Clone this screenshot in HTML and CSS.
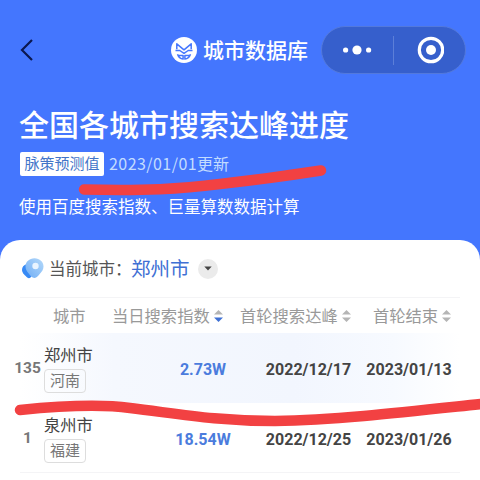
FILE: index.html
```html
<!DOCTYPE html>
<html lang="zh-CN">
<head>
<meta charset="utf-8">
<title>城市数据库</title>
<link rel="stylesheet" href="styles.css">
</head>
<body>
<header class="nav">
  <svg class="back" width="14" height="22" viewBox="0 0 14 22"><path d="M12 1 2 11l10 10"/></svg>
  <div class="brand">
    <svg width="26" height="26" viewBox="0 0 26 26">
      <circle cx="13" cy="13" r="13" fill="#fff"/>
      <g fill="none" stroke="#4476fe" stroke-width="1.5" stroke-linejoin="round">
        <path d="M5.800 12.300V6.800l7.200 6 7.200-6v5.500"/>
        <path d="M4.500 13.500h4.300l4.200 2.800 4.200-2.800h4.300"/>
        <path d="M6.500 17.200c1 2.800 3.300 4.600 5.600 4.900v-3.600H7M19.500 17.200c-1 2.800-3.300 4.600-5.600 4.900v-3.600H19"/>
      </g>
    </svg>
    <span>城市数据库</span>
  </div>
  <div class="capsule">
    <div class="half"><svg width="30" height="10" viewBox="0 0 30 10" fill="#fff"><circle cx="2.600" cy="5" r="2.600"/><circle cx="14" cy="5" r="4.600"/><circle cx="25.600" cy="5" r="2.600"/></svg></div>
    <i class="divider"></i>
    <div class="half"><svg width="28" height="28" viewBox="0 0 28 28"><circle cx="15" cy="14" r="11.700" fill="none" stroke="#fff" stroke-width="3.200"/><circle cx="15" cy="14" r="5" fill="#fff"/></svg></div>
  </div>
</header>
<section class="hero">
  <h1>全国各城市搜索达峰进度</h1>
  <div class="meta"><span class="tag">脉策预测值</span><span class="date"><span class="digits">2023/01/01</span>更新</span></div>
  <p>使用百度搜索指数、巨量算数数据计算</p>
</section>
<main class="card">
  <div class="current">
    <svg width="22" height="21" viewBox="0 0 22 21">
      <defs><linearGradient id="pin" x1="1" y1="0" x2="0" y2="1"><stop offset="0" stop-color="#b4d9fa"/><stop offset="1" stop-color="#6fadf5"/></linearGradient></defs>
      <path d="M5 6C1.500 7 0 9 0 12c.2 3.500 3.200 5.500 5.600 7.800 1 .8 2.400.4 3.400-.8l4-5Z" fill="#378af5"/>
      <path d="M12.500.3c5.200 0 9 3.600 9 8.300 0 3-1.500 5-3.600 7.200-1.600 1.800-3.100 4.100-5.400 4.100-2.600 0-4.100-2-5.600-4.100C4.800 13.500 3.500 11.500 3.500 8.600 3.500 3.900 7.300.3 12.500.3Z" fill="url(#pin)"/>
      <circle cx="13.500" cy="8" r="3.200" fill="#e9f4ff"/>
    </svg>
    <span class="label">当前城市：</span>
    <span class="city-name">郑州市</span>
    <span class="drop"><svg width="8" height="5" viewBox="0 0 8 5"><path d="M.3.4h7.400L4 4.500Z" fill="#444"/></svg></span>
  </div>
  <div class="head">
    <span class="h-city">城市</span>
    <span class="h-index">当日搜索指数<svg class="sort" width="9" height="14" viewBox="0 0 9 14"><path d="M0 5.500 4.500 1 9 5.500Z" fill="#b5b5b5"/><path d="M0 8.500h9L4.500 13Z" fill="#3f70d4"/></svg></span>
    <span class="h-peak">首轮搜索达峰<svg class="sort" width="9" height="14" viewBox="0 0 9 14" fill="#b5b5b5"><path d="M0 5.500 4.500 1 9 5.500ZM0 8.500h9L4.500 13Z"/></svg></span>
    <span class="h-end">首轮结束<svg class="sort" width="9" height="14" viewBox="0 0 9 14" fill="#b5b5b5"><path d="M0 5.500 4.500 1 9 5.500ZM0 8.500h9L4.500 13Z"/></svg></span>
  </div>
  <div class="row active">
    <span class="rank">135</span>
    <div class="city"><b>郑州市</b><span class="province">河南</span></div>
    <span class="num value">2.73W</span><span class="num">2022/12/17</span><span class="num">2023/01/13</span>
  </div>
  <div class="row">
    <span class="rank">1</span>
    <div class="city"><b>泉州市</b><span class="province">福建</span></div>
    <span class="num value">18.54W</span><span class="num">2022/12/25</span><span class="num">2023/01/26</span>
  </div>
</main>
<svg class="marks" width="480" height="480" viewBox="0 0 480 480">
  <path d="M84 189.500C145 191 180 189 220 184C265 179 292 175 321 170.500"/>
  <path d="M20 410C60 406 100 404 130 408C180 414 215 421 275 421C340 420 415 411 486 403.500"/>
</svg>
</body>
</html>
```
FILE: styles.css
```css
* { box-sizing: border-box; }
body {
  margin: 0;
  width: 480px;
  height: 480px;
  overflow: hidden;
  position: relative;
  background: #4476fe;
  font-family: "Noto Sans CJK SC", sans-serif;
  color: #444;
}
svg { display: block; flex: none; }
.nav {
  height: 100px;
  padding: 0 14px 0 20px;
  display: flex;
  align-items: center;
}
.back { fill: none; stroke: #0b1850; stroke-width: 2.2; }
.brand {
  margin-left: 137px;
  display: flex;
  align-items: center;
  gap: 6px;
  color: #fff;
  font-size: 21px;
  font-weight: 500;
  line-height: 30px;
  white-space: nowrap;
}
.brand span { padding-bottom: 2px; }
.capsule {
  margin-left: auto;
  width: 145px;
  height: 48px;
  border: 1px solid #5379dc;
  border-radius: 24px;
  background: #365fcc;
  display: flex;
  align-items: center;
}
.half { flex: 1; display: flex; justify-content: center; }
.divider { width: 1px; height: 29px; background: #5c7fd8; }
.hero { height: 140px; padding: 1px 20px 0 19px; color: #fff; }
h1 { margin: 0; font-size: 30px; line-height: 44px; font-weight: 500; }
.meta { margin-top: 7px; padding-left: 1px; display: flex; height: 24px; align-items: center; gap: 5px; }
.tag {
  width: 84px;
  height: 24px;
  border-radius: 2px;
  background: #fff;
  color: #4275c8;
  font-size: 15px;
  line-height: 22px;
  text-align: center;
}
.date { color: #c3dcff; font-size: 16px; line-height: 22px; padding-bottom: 2px; white-space: nowrap; }
.digits { letter-spacing: 0.45px; }
.hero p { margin: 18px 0 0; font-size: 16.5px; line-height: 24px; }
.card { height: 240px; background: #fff; border-radius: 20px 20px 0 0; overflow: hidden; }
.current { height: 57px; padding-left: 22px; display: flex; align-items: center; }
.label { margin-left: 5px; width: 82px; padding-bottom: 2px; font-size: 16.5px; line-height: 24px; white-space: nowrap; color: #555; }
.city-name { color: #3f70d4; font-size: 19.5px; line-height: 28px; padding-bottom: 1px; }
.drop {
  margin-left: 8px;
  width: 20px;
  height: 20px;
  border-radius: 50%;
  background: #ebebeb;
  display: flex;
  align-items: center;
  justify-content: center;
}
.head {
  height: 36px;
  margin: 0 20px;
  padding: 0 0 2px 33px;
  border-top: 1px solid #f4f4f6;
  display: flex;
  align-items: center;
  color: #999;
  font-size: 16.3px;
  white-space: nowrap;
}
.head span { display: flex; align-items: center; gap: 4px; }
.sort { margin-top: 2px; }
.h-city { width: 59px; }
.h-index { width: 128px; }
.h-peak { width: 133px; }
.row {
  height: 70px;
  margin-left: 14px;
  width: 446px;
  display: grid;
  grid-template-columns: 27px 109px 106px 105px 96px;
  align-items: center;
  background: linear-gradient(#f4f4f6, #f4f4f6) 6px 100% / 440px 1px no-repeat;
}
.row.active { background: linear-gradient(90deg, #fff 6px, #f5f8fe 100px, #f2f6fe 280px, #f7faff 380px, #fff); }
.rank, .num {
  font-family: Roboto, sans-serif;
  font-weight: 700;
  text-align: center;
  font-size: 16px;
}
.rank { font-size: 15.5px; color: #777; }
.num { padding-top: 2px; }
.value { color: #4b7cdd; }
.city { padding-left: 3px; display: flex; flex-direction: column; align-items: flex-start; }
.city b { font-size: 16.3px; font-weight: 400; line-height: 22px; margin-top: -1px; }
.province {
  margin-top: 4px;
  width: 42px;
  height: 24px;
  border: 1px solid #ddd;
  border-radius: 4px;
  color: #777;
  font-size: 15px;
  line-height: 20px;
  text-align: center;
}
.marks {
  position: absolute;
  inset: 0;
  fill: none;
  stroke: #f24142;
  stroke-width: 10.5;
  stroke-linecap: round;
  pointer-events: none;
}
```
